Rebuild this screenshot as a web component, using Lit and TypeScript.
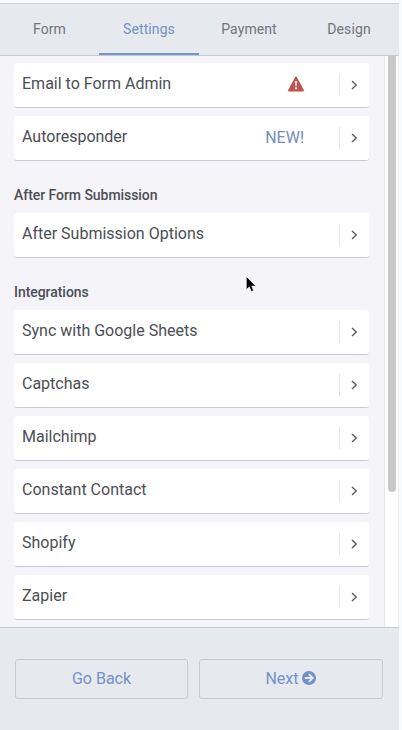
import { LitElement, html, css, nothing } from "lit";
import { customElement, property } from "lit/decorators.js";

@customElement("setting-row")
class SettingRow extends LitElement {
  @property() label = "";
  @property() badge = "";

  static styles = css`
    :host { display: flex; box-sizing: border-box; height: 45px; align-items: center; background: #fff;
      border-bottom: 1px solid #c6cad2; border-radius: 3px; padding: 0 8px; color: #4c4e55; font-size: 16px; }
    .label { flex: 1; white-space: nowrap; line-height: 20px; padding-bottom: 3px; }
    .new { color: #738fbd; margin-right: 35px; padding-bottom: 1px; }
    .warn { width: 17px; height: 16px; margin: 0 35px 2px 0; display: block; }
    .divider { width: 1px; height: 22px; background: #e4e5e8; }
    .chevron { width: 8px; height: 12px; margin: 0 2px 0 11px; display: block; }
  `;

  render() {
    return html`
      <span class="label">${this.label}</span>
      ${this.badge === "new" ? html`<span class="new">NEW!</span>` : nothing}
      ${this.badge === "warn"
        ? html`<svg class="warn" viewBox="0 0 17 16">
            <path d="M9 1.5 16 14.5H2Z" fill="#c0514f" stroke="#c0514f" stroke-width="1.8" stroke-linejoin="round" />
            <path d="M7.8 5h2.4l-.4 5H8.2ZM7.9 11.2h2.2v2h-2.2Z" fill="#f6dedd" />
          </svg>`
        : nothing}
      <span class="divider"></span>
      <svg class="chevron" viewBox="0 0 8 12">
        <path d="M1 2 5.2 6 1 10" fill="none" stroke="#5b5d62" stroke-width="1.4" />
      </svg>
    `;
  }
}

@customElement("app-root")
class AppRoot extends LitElement {
  static styles = css`
    :host { display: block; width: 402px; height: 730px; box-sizing: border-box; background: #f9fafc; padding-top: 3px;
      position: relative; overflow: hidden; font-family: Roboto, sans-serif; }
    .panel { width: 399px; height: 727px; display: flex; flex-direction: column; background: #e6e9ee; }
    .tabs { display: flex; height: 53px; box-sizing: border-box; border-top: 1px solid #cbd1d8; border-bottom: 1px solid #c6ccd5; }
    .tab { flex: 0 0 100px; display: flex; justify-content: center; align-items: center; font-size: 14px; letter-spacing: 0.1px; color: #71747a;
      box-sizing: border-box; border-bottom: 2px solid transparent; }
    .first { flex: 0 0 99px; }
    .active { color: #7391c3; border-color: #7695c4; }
    .body { display: flex; height: 571px; }
    .list { width: 385px; box-sizing: border-box; padding: 7px 15px 0 14px; background: #f4f4f9; display: flex; flex-direction: column; gap: 8px; border-right: 1px solid #e6e7eb; }
    .heading { height: 36px; box-sizing: border-box; padding-top: 16px; line-height: 20px; font-size: 14px; font-weight: 500; color: #4c4e56; letter-spacing: -0.05px; white-space: nowrap; }
    .track { flex: 1; background: #fff; display: flex; border-right: 1px solid #eceef1; }
    .thumb { width: 8px; height: 436px; margin-left: 3px; background: #c8c8c8; border-radius: 0 0 4px 4px; }
    .footer { flex: 1; border-top: 1px solid #c7cbd1; display: flex; gap: 11px; padding: 31px 16px 0 15px; }
    .button { box-sizing: border-box; height: 40px; width: 173px; border: 1px solid #c6cbd3; border-radius: 3px; display: flex; align-items: center;
      justify-content: center; gap: 4px; color: #7391c6; font-size: 16px; padding-bottom: 2px; }
    .wide { width: 184px; }
    .arrow { width: 14px; height: 14px; margin-left: -1px; margin-right: 1px; }
    .pointer { position: absolute; left: 245px; top: 275px; width: 12px; height: 19px; }
  `;

  row(label: string, badge = "") {
    return html`<setting-row .label=${label} .badge=${badge}></setting-row>`;
  }

  render() {
    const integrations = ["Sync with Google Sheets", "Captchas", "Mailchimp", "Constant Contact", "Shopify", "Zapier"];
    return html`
      <div class="panel">
        <div class="tabs">
          <div class="tab first">Form</div>
          <div class="tab active">Settings</div>
          <div class="tab">Payment</div>
          <div class="tab">Design</div>
        </div>
        <div class="body">
          <div class="list">
            ${this.row("Email to Form Admin", "warn")} ${this.row("Autoresponder", "new")}
            <div class="heading">After Form Submission</div>
            ${this.row("After Submission Options")}
            <div class="heading">Integrations</div>
            ${integrations.map((name) => this.row(name))}
          </div>
          <div class="track"><div class="thumb"></div></div>
        </div>
        <div class="footer">
          <div class="button">Go Back</div>
          <div class="button wide">
            Next
            <svg class="arrow" viewBox="0 0 14 14">
              <circle cx="7" cy="7" r="7" fill="#7391c6" />
              <path d="M2.8 7H10M6.9 3.2 10.7 7 6.9 10.8" fill="none" stroke="#e6e9ee" stroke-width="1.9" />
            </svg>
          </div>
        </div>
      </div>
      <svg class="pointer" viewBox="0 0 12 19">
        <path d="M1.2 1.2V14.8L4.3 12.1 6.2 16.7 8.7 15.6 6.9 11.3H11Z" fill="#000" stroke="#fff" stroke-width="0.8" />
      </svg>
    `;
  }
}
